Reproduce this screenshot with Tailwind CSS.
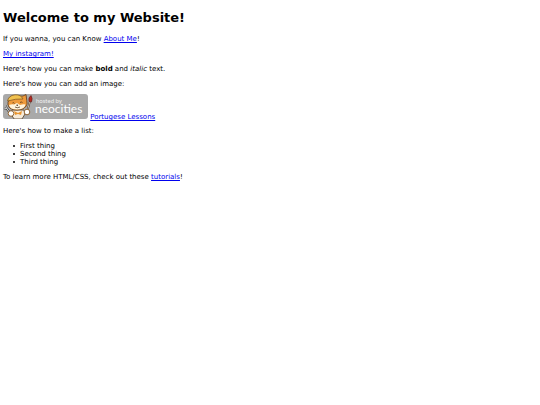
<!DOCTYPE html>
<html lang="en">
<head>
    <meta charset="UTF-8">
    <meta name="viewport" content="width=device-width, initial-scale=1.0">
    <title>Welcome to my Website!</title>
    <script src="https://cdn.jsdelivr.net/npm/@tailwindcss/browser@4"></script>
</head>
<body class="bg-white text-black font-['DejaVu_Sans',Verdana,sans-serif] text-[7px] leading-[8px] px-[3px] py-2.5">
    <h1 class="text-[13px] leading-4 font-bold mb-[9px]">Welcome to my Website!</h1>

    <div class="flex flex-col gap-[7px]">
        <p>If you wanna, you can Know <a href="#about" class="text-[#0000ee] underline">About Me</a>!</p>
        <p><a href="#instagram" class="text-[#0000ee] underline">My instagram!</a></p>
        <p>Here's how you can make <strong>bold</strong> and <em>italic</em> text.</p>
        <p>Here's how you can add an image:</p>

        <p class="-my-px">
            <svg class="inline align-baseline" width="85" height="25" viewBox="0 0 85 25" role="img" aria-label="Hosted by Neocities">
                <rect width="85" height="25" rx="3" fill="#a9a9a9"/>
                <!-- body and arms -->
                <path d="M9 16h12l1 4-3 5h-8l-3-5z" fill="#f6ead8" stroke="#5b4a38" stroke-width=".9"/>
                <path d="M11 17l4 2 4-2-1 4-3-1-3 1z" fill="#e9952f"/>
                <!-- head -->
                <path d="M6 4l3-2 11 0 3-1.500.8 6q1.200 4-1.300 6.500Q19.500 16 14 16 6.500 16 5 11q-.5-3 1-5z" fill="#ee9a3c" stroke="#5a3716" stroke-width=".8" stroke-linejoin="round"/>
                <path d="M6 11q3-1 5-.5l3-1.500 3 2q3-1 5.500-.5-1 5-8.500 5-7 0-8-4.500z" fill="#fff3dc"/>
                <path d="M9.500 9q1-1 2 .5M17 8.500q1.500-1 2.500 0M13.500 11h1.500l-.8.800zM12 13q2 1.500 5 0" fill="none" stroke="#442c17" stroke-width=".7"/>
                <!-- cap -->
                <path d="M4.500 7Q5.500 1.500 12 .8q6-.3 8 4.200-7-.5-15.500 2z" fill="#f0c14f" stroke="#7a5320" stroke-width=".7"/>
                <!-- wrench in the left paw -->
                <path d="M7 19L3.500 14M1 15l2.500-.5 1-3" fill="none" stroke="#4a4a4a" stroke-width="2.200"/>
                <path d="M7 19L3.500 14M1 15l2.500-.5 1-3" fill="none" stroke="#d5d5d5" stroke-width="1"/>
                <!-- brush in the right paw -->
                <path d="M24 18l3-11" stroke="#4a3525" stroke-width="1.800"/>
                <path d="M24 18l3-11" stroke="#ead9c0" stroke-width=".8"/>
                <path d="M26 7.500q-1-4 2-6 2 3 .5 6.500z" fill="#b72920" stroke="#5c1e19" stroke-width=".6"/>
                <circle cx="8" cy="19.500" r="2.800" fill="#fff" stroke="#8a5a25" stroke-width=".9"/>
                <circle cx="24" cy="18" r="2.800" fill="#fff" stroke="#8a5a25" stroke-width=".9"/>
                <text x="33" y="9" class="font-[Lato,sans-serif] text-[6px]" fill="#f0f0f0">hosted by</text>
                <text x="32" y="19" class="font-[Lato,sans-serif] text-[12px]" fill="#fff">neocities</text>
            </svg>
            <a href="#portugese" class="text-[#0000ee] underline">Portugese Lessons</a>
        </p>

        <p>Here's how to make a list:</p>

        <ul class="pl-2.5">
            <li class="flex items-center gap-[5px] before:size-0.5 before:rounded-full before:bg-black">First thing</li>
            <li class="flex items-center gap-[5px] before:size-0.5 before:rounded-full before:bg-black">Second thing</li>
            <li class="flex items-center gap-[5px] before:size-0.5 before:rounded-full before:bg-black">Third thing</li>
        </ul>

        <p>To learn more HTML/CSS, check out these <a href="#tutorials" class="text-[#0000ee] underline">tutorials</a>!</p>
    </div>
</body>
</html>
